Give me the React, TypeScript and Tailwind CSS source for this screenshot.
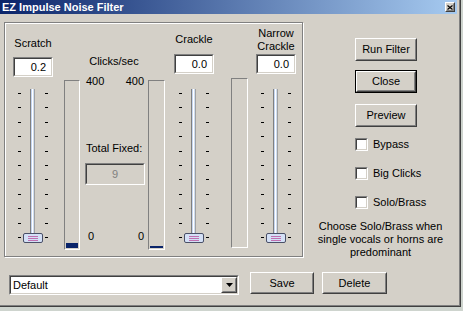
import React from "react";

/* Win2k-style bevels */
const sunkenOuter = "border border-t-[#808080] border-l-[#808080] border-b-white border-r-white";
const sunkenInner = "border border-t-[#404040] border-l-[#404040] border-b-[#d4d0c8] border-r-[#d4d0c8]";
const raisedOuter = "border border-t-white border-l-white border-b-[#404040] border-r-[#404040]";
const raisedInner = "border border-t-[#d4d0c8] border-l-[#d4d0c8] border-b-[#808080] border-r-[#808080]";

function Button({ label, className = "", isDefault = false }: { label: string; className?: string; isDefault?: boolean }) {
  const face = (
    <div className={`flex h-full w-full ${raisedOuter}`}>
      <div className={`flex flex-1 items-center justify-center bg-[#d4d0c8] ${raisedInner}`}>{label}</div>
    </div>
  );
  return (
    <div className={`flex ${className}`}>
      {isDefault ? <div className="flex h-full w-full border border-black">{face}</div> : face}
    </div>
  );
}

function Field({ value, className = "", disabled = false }: { value: string; className?: string; disabled?: boolean }) {
  return (
    <div className={`flex ${sunkenOuter} ${className}`}>
      <div
        className={`flex flex-1 items-center ${sunkenInner} ${
          disabled ? "justify-center bg-[#d4d0c8] text-[#808080]" : "justify-end bg-white pr-[5px]"
        }`}
      >
        {value}
      </div>
    </div>
  );
}

function Checkbox({ label, className = "" }: { label: string; className?: string }) {
  return (
    <div className={`flex items-center ${className}`}>
      <div className={`flex h-[13px] w-[13px] ${sunkenOuter}`}>
        <div className={`flex-1 bg-white ${sunkenInner}`} />
      </div>
      <span className="ml-[5px]">{label}</span>
    </div>
  );
}

function Slider({ className = "" }: { className?: string }) {
  const ticks = Array.from({ length: 11 }, (_, i) => i);
  return (
    <div className={`relative h-[160px] w-[40px] ${className}`}>
      <div className="flex h-full flex-col justify-between pb-[8px] pt-[7px]">
        {ticks.map((i) => (
          <div key={i} className="flex h-px justify-between px-[5px]">
            <span className="h-px w-[3px] bg-black" />
            <span className="h-px w-[3px] bg-black" />
          </div>
        ))}
      </div>
      {/* track */}
      <div className="absolute left-[17px] top-[3px] h-[151px] w-[5px] border-x border-l-[#808080] border-r-[#a0a0a0] bg-[linear-gradient(90deg,#a8c0e8,#ffffff,#b8cce8)]" />
      {/* thumb */}
      <div className="absolute left-[10px] top-[147px] flex h-[10px] w-[20px] flex-col items-center justify-center gap-px rounded-[2px] border border-[#4a5068] bg-[#d4e0f6]">
        <span className="h-px w-[10px] bg-[#c070b0]" />
        <span className="h-px w-[10px] bg-[#c070b0]" />
        <span className="h-px w-[10px] bg-[#c070b0]" />
      </div>
    </div>
  );
}

function Meter({ fill = 0, className = "" }: { fill?: number; className?: string }) {
  return (
    <div className={`flex h-[170px] flex-col justify-end border border-t-[#808080] border-l-[#808080] border-b-white border-r-white px-px pb-px ${className}`}>
      {fill > 0 && <div className="w-full bg-[#0a246a]" style={{ height: fill }} />}
    </div>
  );
}

export default function App() {
  return (
    <div className="h-[311px] w-[463px] bg-[#ced4ce] font-['Liberation_Sans',Arial,sans-serif] text-[11px] leading-[13px] text-black">
      <div className="h-[307px] w-[461px] border-b border-r border-[#404040]">
        <div className="flex h-full w-full flex-col border-b border-r border-[#808080] bg-[#d4d0c8]">
          {/* Title bar */}
          <div className="mr-[2px] flex h-[14px] shrink-0 items-center justify-between bg-[linear-gradient(90deg,#0a246a,#a6caf0)]">
            <span className="pl-[2px] text-[11px] font-bold leading-[14px] text-white">EZ Impulse Noise Filter</span>
            <div className={`mr-[2px] flex h-[10px] w-[10px] ${raisedOuter}`}>
              <div className={`flex flex-1 items-center justify-center bg-[#d4d0c8] ${raisedInner}`}>
                <svg width="6" height="5" viewBox="0 0 6 5">
                  <path d="M0.5 0.5 L5.5 4.5 M5.5 0.5 L0.5 4.5" stroke="#000" strokeWidth="1.2" />
                </svg>
              </div>
            </div>
          </div>

          <div className="flex h-[243px] shrink-0 items-start">
            {/* Group box */}
            <div className="ml-[4px] mt-[8px] flex h-[235px] w-[299px] items-start border border-[#808080] shadow-[1px_1px_0_#fff,inset_1px_1px_0_#fff]">
              <div className="ml-[8px] flex w-[40px] flex-col items-center">
                <span className="mt-[14px]">Scratch</span>
                <Field value="0.2" className="mt-[7px] h-[20px] w-[40px]" />
                <Slider className="mt-[9px]" />
              </div>

              <Meter fill={5} className="ml-[11px] mt-[57px] w-[16px]" />

              <div className="flex w-[68px] flex-col">
                <span className="mt-[32px] text-center">Clicks/sec</span>
                <div className="mt-[7px] flex justify-between pl-[6px] pr-[4px]">
                  <span>400</span>
                  <span>400</span>
                </div>
                <span className="mt-[54px] pl-[6px]">Total Fixed:</span>
                <Field value="9" disabled className="ml-[5px] mt-[8px] h-[22px] w-[60px]" />
                <div className="mt-[45px] flex justify-between pl-[8px] pr-[4px]">
                  <span>0</span>
                  <span>0</span>
                </div>
              </div>

              <Meter fill={2} className="mt-[57px] w-[17px]" />

              <div className="ml-[9px] flex w-[40px] flex-col items-center">
                <span className="mt-[10px]">Crackle</span>
                <Field value="0.0" className="mt-[8px] h-[20px] w-[40px]" />
                <Slider className="mt-[12px]" />
              </div>

              <Meter className="ml-[17px] mt-[55px] w-[17px]" />

              <div className="ml-[8px] flex w-[40px] flex-col items-center">
                <span className="mt-[4px] text-center">
                  Narrow
                  <br />
                  Crackle
                </span>
                <Field value="0.0" className="mt-[1px] h-[20px] w-[40px]" />
                <Slider className="mt-[12px]" />
              </div>
            </div>

            {/* Right column */}
            <div className="ml-[15px] flex w-[125px] flex-col items-center">
              <div className="flex w-full flex-col pl-[37px]">
                <Button label="Run Filter" className="mt-[24px] h-[23px] w-[62px]" />
                <Button label="Close" isDefault className="mt-[9px] h-[23px] w-[62px]" />
                <Button label="Preview" className="mt-[11px] h-[23px] w-[62px]" />
                <Checkbox label="Bypass" className="mt-[11px]" />
                <Checkbox label="Big Clicks" className="mt-[16px]" />
                <Checkbox label="Solo/Brass" className="mt-[16px]" />
              </div>
              <p className="mt-[11px] whitespace-nowrap text-center">
                Choose Solo/Brass when
                <br />
                single vocals or horns are
                <br />
                predominant
              </p>
            </div>
          </div>

          {/* Bottom row */}
          <div className="mt-[15px] flex items-start">
            <div className={`ml-[9px] mt-[3px] flex h-[20px] w-[230px] ${sunkenOuter}`}>
              <div className={`flex flex-1 items-center bg-white ${sunkenInner}`}>
                <span className="flex-1 pl-[2px]">Default</span>
                <div className={`flex h-[16px] w-[16px] ${raisedOuter}`}>
                  <div className={`flex flex-1 items-center justify-center bg-[#d4d0c8] ${raisedInner}`}>
                    <svg width="7" height="4" viewBox="0 0 7 4">
                      <path d="M0 0 H7 L3.5 4 Z" fill="#000" />
                    </svg>
                  </div>
                </div>
              </div>
            </div>
            <Button label="Save" className="ml-[11px] h-[22px] w-[64px]" />
            <Button label="Delete" className="ml-[8px] h-[22px] w-[65px]" />
          </div>
        </div>
      </div>
    </div>
  );
}
